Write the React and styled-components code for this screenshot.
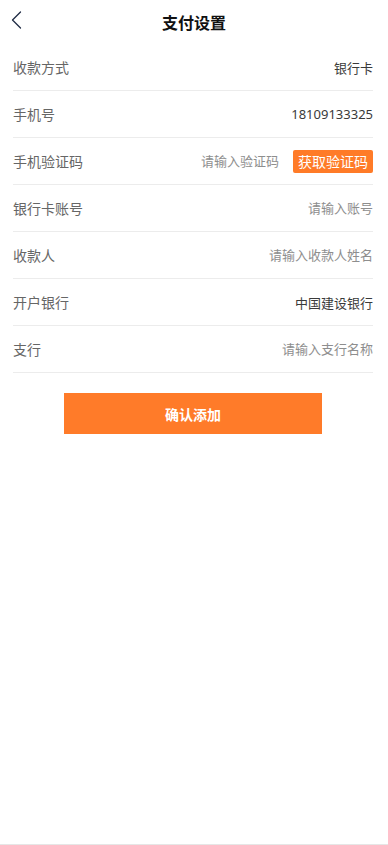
import React, { useState } from 'react'
import styled, { createGlobalStyle } from 'styled-components'

const GlobalStyle = createGlobalStyle`
    * { box-sizing: border-box; }
    body {
        margin: 0;
        background: #fff;
        font-family: "Noto Sans", "Noto Sans CJK SC", sans-serif;
    }
`

const rows = [
    { label: '收款方式', value: '银行卡' },
    { label: '手机号', value: '18109133325' },
    { label: '手机验证码', placeholder: '请输入验证码', code: true },
    { label: '银行卡账号', placeholder: '请输入账号' },
    { label: '收款人', placeholder: '请输入收款人姓名' },
    { label: '开户银行', value: '中国建设银行' },
    { label: '支行', placeholder: '请输入支行名称' },
]

const App = () => {
    const [form, setForm] = useState({})

    return (
        <Page>
            <GlobalStyle />
            <Header>
                <Back aria-label="back">
                    <svg width="11" height="18" viewBox="0 0 11 18" fill="none">
                        <path d="M9.5 1L1.5 9L9.5 17" stroke="#1f2a44" strokeWidth="1.3" strokeLinecap="round" strokeLinejoin="round" />
                    </svg>
                </Back>
                <Title>支付设置</Title>
            </Header>
            <List>
                {rows.map(row => (
                    <Row key={row.label}>
                        <Label>{row.label}</Label>
                        <Right>
                            {row.value ? (
                                <Value>{row.value}</Value>
                            ) : (
                                <Input
                                    placeholder={row.placeholder}
                                    value={form[row.label] || ''}
                                    onChange={e => setForm({ ...form, [row.label]: e.target.value })}
                                />
                            )}
                            {row.code && <CodeButton>获取验证码</CodeButton>}
                        </Right>
                    </Row>
                ))}
            </List>
            <Submit>确认添加</Submit>
        </Page>
    )
}

const Page = styled.div`
    min-height: 845px;
    border-bottom: 1px solid #e6e6e6;
`

const Header = styled.div`
    position: relative;
    height: 44px;
    display: flex;
    align-items: center;
    justify-content: center;
`

const Back = styled.button`
    position: absolute;
    left: 11px;
    top: 11px;
    border: none;
    background: none;
    padding: 0;
    display: flex;
`

const Title = styled.h1`
    margin: 0;
    font-size: 16px;
    font-weight: 700;
    color: #111;
`

const List = styled.div`
    padding: 0 15px 0 13px;
`

const Row = styled.div`
    height: 47px;
    display: flex;
    align-items: center;
    justify-content: space-between;
    border-bottom: 1px solid #ececec;
`

const Label = styled.span`
    font-size: 14px;
    color: #666;
`

const Right = styled.div`
    display: flex;
    align-items: center;
    gap: 14px;
`

const Value = styled.span`
    font-size: 13px;
    color: #3a3a3a;
`

const Input = styled.input`
    border: none;
    outline: none;
    width: 160px;
    padding: 0;
    text-align: right;
    font-family: inherit;
    font-size: 13px;
    color: #333;
    background: transparent;

    &::placeholder {
        color: #8e8e8e;
    }
`

const CodeButton = styled.button`
    height: 23px;
    padding: 0 5px;
    border: none;
    border-radius: 2px;
    background: #ff7b28;
    color: #fff;
    font-family: inherit;
    font-size: 14px;
    line-height: 23px;
`

const Submit = styled.button`
    display: block;
    width: 258px;
    height: 41px;
    margin: 20px auto 0 64px;
    border: none;
    background: #ff7b29;
    color: #fff;
    font-family: inherit;
    font-size: 14px;
    font-weight: 700;
`

export default App
